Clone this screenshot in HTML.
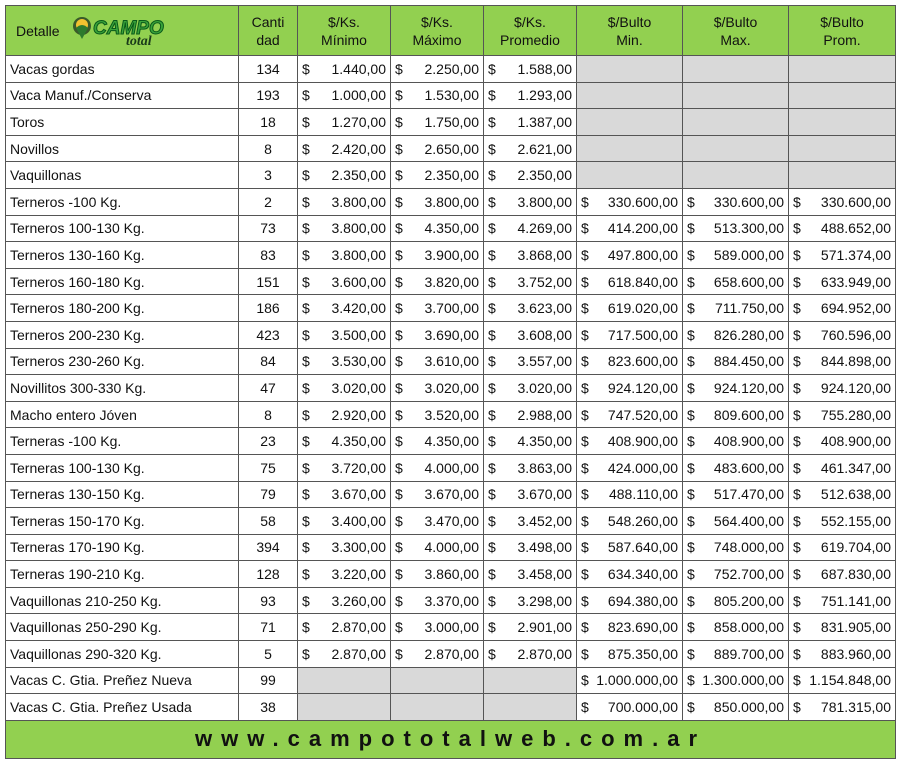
<!DOCTYPE html>
<html><head><meta charset="utf-8"><style>
body{margin:0;background:#fff;width:900px;height:765px;overflow:hidden;font-family:"Liberation Sans",sans-serif;}
table{position:absolute;left:5px;top:5px;border-collapse:collapse;table-layout:fixed;width:890px;}
tr{height:26.6px}
td{border:1px solid #555;font-size:14px;color:#111;padding:0 4px;white-space:nowrap;overflow:hidden;}
tr.h{height:50px}
tr.h td{background:#92d050;text-align:center;font-size:14px;line-height:18px;}
td.c{text-align:center}
td.g{background:#d9d9d9}
.m{display:flex;justify-content:space-between}
tr.f{height:38px}
tr.f td{background:#92d050;text-align:center;font-weight:bold;font-size:22px;letter-spacing:9px;}
</style></head><body>
<table>
<colgroup><col style="width:233px"><col style="width:59px"><col style="width:93px"><col style="width:93px"><col style="width:93px"><col style="width:106px"><col style="width:106px"><col style="width:107px"></colgroup>
<tr class="h"><td style="text-align:left;padding-left:10px"><span style="vertical-align:middle">Detalle</span>
<svg width="105" height="34" viewBox="0 0 105 34" style="vertical-align:middle;margin-left:8px"><circle cx="11" cy="12" r="9" fill="#3a5a2a"/><circle cx="11" cy="11" r="6" fill="#f2c230"/><path d="M5 14 Q11 8 17 14 L11 25 Z" fill="#2d7a2d"/><text x="22" y="20" font-family="Liberation Sans" font-weight="bold" font-style="italic" font-size="19" fill="#3aa33a" stroke="#0a5a1a" stroke-width="1">CAMPO</text><text x="55" y="31" font-family="Liberation Serif" font-style="italic" font-weight="bold" font-size="14" fill="#1a3a1a">total</text></svg></td>
<td>Canti<br>dad</td><td>$/Ks.<br>Mínimo</td><td>$/Ks.<br>Máximo</td><td>$/Ks.<br>Promedio</td><td>$/Bulto<br>Min.</td><td>$/Bulto<br>Max.</td><td>$/Bulto<br>Prom.</td></tr>
<tr><td>Vacas gordas</td><td class="c">134</td><td><div class="m"><span>$</span><span>1.440,00</span></div></td><td><div class="m"><span>$</span><span>2.250,00</span></div></td><td><div class="m"><span>$</span><span>1.588,00</span></div></td><td class="g"></td><td class="g"></td><td class="g"></td></tr>
<tr><td>Vaca Manuf./Conserva</td><td class="c">193</td><td><div class="m"><span>$</span><span>1.000,00</span></div></td><td><div class="m"><span>$</span><span>1.530,00</span></div></td><td><div class="m"><span>$</span><span>1.293,00</span></div></td><td class="g"></td><td class="g"></td><td class="g"></td></tr>
<tr><td>Toros</td><td class="c">18</td><td><div class="m"><span>$</span><span>1.270,00</span></div></td><td><div class="m"><span>$</span><span>1.750,00</span></div></td><td><div class="m"><span>$</span><span>1.387,00</span></div></td><td class="g"></td><td class="g"></td><td class="g"></td></tr>
<tr><td>Novillos</td><td class="c">8</td><td><div class="m"><span>$</span><span>2.420,00</span></div></td><td><div class="m"><span>$</span><span>2.650,00</span></div></td><td><div class="m"><span>$</span><span>2.621,00</span></div></td><td class="g"></td><td class="g"></td><td class="g"></td></tr>
<tr><td>Vaquillonas</td><td class="c">3</td><td><div class="m"><span>$</span><span>2.350,00</span></div></td><td><div class="m"><span>$</span><span>2.350,00</span></div></td><td><div class="m"><span>$</span><span>2.350,00</span></div></td><td class="g"></td><td class="g"></td><td class="g"></td></tr>
<tr><td>Terneros -100 Kg.</td><td class="c">2</td><td><div class="m"><span>$</span><span>3.800,00</span></div></td><td><div class="m"><span>$</span><span>3.800,00</span></div></td><td><div class="m"><span>$</span><span>3.800,00</span></div></td><td><div class="m"><span>$</span><span>330.600,00</span></div></td><td><div class="m"><span>$</span><span>330.600,00</span></div></td><td><div class="m"><span>$</span><span>330.600,00</span></div></td></tr>
<tr><td>Terneros 100-130 Kg.</td><td class="c">73</td><td><div class="m"><span>$</span><span>3.800,00</span></div></td><td><div class="m"><span>$</span><span>4.350,00</span></div></td><td><div class="m"><span>$</span><span>4.269,00</span></div></td><td><div class="m"><span>$</span><span>414.200,00</span></div></td><td><div class="m"><span>$</span><span>513.300,00</span></div></td><td><div class="m"><span>$</span><span>488.652,00</span></div></td></tr>
<tr><td>Terneros 130-160 Kg.</td><td class="c">83</td><td><div class="m"><span>$</span><span>3.800,00</span></div></td><td><div class="m"><span>$</span><span>3.900,00</span></div></td><td><div class="m"><span>$</span><span>3.868,00</span></div></td><td><div class="m"><span>$</span><span>497.800,00</span></div></td><td><div class="m"><span>$</span><span>589.000,00</span></div></td><td><div class="m"><span>$</span><span>571.374,00</span></div></td></tr>
<tr><td>Terneros 160-180 Kg.</td><td class="c">151</td><td><div class="m"><span>$</span><span>3.600,00</span></div></td><td><div class="m"><span>$</span><span>3.820,00</span></div></td><td><div class="m"><span>$</span><span>3.752,00</span></div></td><td><div class="m"><span>$</span><span>618.840,00</span></div></td><td><div class="m"><span>$</span><span>658.600,00</span></div></td><td><div class="m"><span>$</span><span>633.949,00</span></div></td></tr>
<tr><td>Terneros 180-200 Kg.</td><td class="c">186</td><td><div class="m"><span>$</span><span>3.420,00</span></div></td><td><div class="m"><span>$</span><span>3.700,00</span></div></td><td><div class="m"><span>$</span><span>3.623,00</span></div></td><td><div class="m"><span>$</span><span>619.020,00</span></div></td><td><div class="m"><span>$</span><span>711.750,00</span></div></td><td><div class="m"><span>$</span><span>694.952,00</span></div></td></tr>
<tr><td>Terneros 200-230 Kg.</td><td class="c">423</td><td><div class="m"><span>$</span><span>3.500,00</span></div></td><td><div class="m"><span>$</span><span>3.690,00</span></div></td><td><div class="m"><span>$</span><span>3.608,00</span></div></td><td><div class="m"><span>$</span><span>717.500,00</span></div></td><td><div class="m"><span>$</span><span>826.280,00</span></div></td><td><div class="m"><span>$</span><span>760.596,00</span></div></td></tr>
<tr><td>Terneros 230-260 Kg.</td><td class="c">84</td><td><div class="m"><span>$</span><span>3.530,00</span></div></td><td><div class="m"><span>$</span><span>3.610,00</span></div></td><td><div class="m"><span>$</span><span>3.557,00</span></div></td><td><div class="m"><span>$</span><span>823.600,00</span></div></td><td><div class="m"><span>$</span><span>884.450,00</span></div></td><td><div class="m"><span>$</span><span>844.898,00</span></div></td></tr>
<tr><td>Novillitos 300-330 Kg.</td><td class="c">47</td><td><div class="m"><span>$</span><span>3.020,00</span></div></td><td><div class="m"><span>$</span><span>3.020,00</span></div></td><td><div class="m"><span>$</span><span>3.020,00</span></div></td><td><div class="m"><span>$</span><span>924.120,00</span></div></td><td><div class="m"><span>$</span><span>924.120,00</span></div></td><td><div class="m"><span>$</span><span>924.120,00</span></div></td></tr>
<tr><td>Macho entero Jóven</td><td class="c">8</td><td><div class="m"><span>$</span><span>2.920,00</span></div></td><td><div class="m"><span>$</span><span>3.520,00</span></div></td><td><div class="m"><span>$</span><span>2.988,00</span></div></td><td><div class="m"><span>$</span><span>747.520,00</span></div></td><td><div class="m"><span>$</span><span>809.600,00</span></div></td><td><div class="m"><span>$</span><span>755.280,00</span></div></td></tr>
<tr><td>Terneras -100 Kg.</td><td class="c">23</td><td><div class="m"><span>$</span><span>4.350,00</span></div></td><td><div class="m"><span>$</span><span>4.350,00</span></div></td><td><div class="m"><span>$</span><span>4.350,00</span></div></td><td><div class="m"><span>$</span><span>408.900,00</span></div></td><td><div class="m"><span>$</span><span>408.900,00</span></div></td><td><div class="m"><span>$</span><span>408.900,00</span></div></td></tr>
<tr><td>Terneras 100-130 Kg.</td><td class="c">75</td><td><div class="m"><span>$</span><span>3.720,00</span></div></td><td><div class="m"><span>$</span><span>4.000,00</span></div></td><td><div class="m"><span>$</span><span>3.863,00</span></div></td><td><div class="m"><span>$</span><span>424.000,00</span></div></td><td><div class="m"><span>$</span><span>483.600,00</span></div></td><td><div class="m"><span>$</span><span>461.347,00</span></div></td></tr>
<tr><td>Terneras 130-150 Kg.</td><td class="c">79</td><td><div class="m"><span>$</span><span>3.670,00</span></div></td><td><div class="m"><span>$</span><span>3.670,00</span></div></td><td><div class="m"><span>$</span><span>3.670,00</span></div></td><td><div class="m"><span>$</span><span>488.110,00</span></div></td><td><div class="m"><span>$</span><span>517.470,00</span></div></td><td><div class="m"><span>$</span><span>512.638,00</span></div></td></tr>
<tr><td>Terneras 150-170 Kg.</td><td class="c">58</td><td><div class="m"><span>$</span><span>3.400,00</span></div></td><td><div class="m"><span>$</span><span>3.470,00</span></div></td><td><div class="m"><span>$</span><span>3.452,00</span></div></td><td><div class="m"><span>$</span><span>548.260,00</span></div></td><td><div class="m"><span>$</span><span>564.400,00</span></div></td><td><div class="m"><span>$</span><span>552.155,00</span></div></td></tr>
<tr><td>Terneras 170-190 Kg.</td><td class="c">394</td><td><div class="m"><span>$</span><span>3.300,00</span></div></td><td><div class="m"><span>$</span><span>4.000,00</span></div></td><td><div class="m"><span>$</span><span>3.498,00</span></div></td><td><div class="m"><span>$</span><span>587.640,00</span></div></td><td><div class="m"><span>$</span><span>748.000,00</span></div></td><td><div class="m"><span>$</span><span>619.704,00</span></div></td></tr>
<tr><td>Terneras 190-210 Kg.</td><td class="c">128</td><td><div class="m"><span>$</span><span>3.220,00</span></div></td><td><div class="m"><span>$</span><span>3.860,00</span></div></td><td><div class="m"><span>$</span><span>3.458,00</span></div></td><td><div class="m"><span>$</span><span>634.340,00</span></div></td><td><div class="m"><span>$</span><span>752.700,00</span></div></td><td><div class="m"><span>$</span><span>687.830,00</span></div></td></tr>
<tr><td>Vaquillonas 210-250 Kg.</td><td class="c">93</td><td><div class="m"><span>$</span><span>3.260,00</span></div></td><td><div class="m"><span>$</span><span>3.370,00</span></div></td><td><div class="m"><span>$</span><span>3.298,00</span></div></td><td><div class="m"><span>$</span><span>694.380,00</span></div></td><td><div class="m"><span>$</span><span>805.200,00</span></div></td><td><div class="m"><span>$</span><span>751.141,00</span></div></td></tr>
<tr><td>Vaquillonas 250-290 Kg.</td><td class="c">71</td><td><div class="m"><span>$</span><span>2.870,00</span></div></td><td><div class="m"><span>$</span><span>3.000,00</span></div></td><td><div class="m"><span>$</span><span>2.901,00</span></div></td><td><div class="m"><span>$</span><span>823.690,00</span></div></td><td><div class="m"><span>$</span><span>858.000,00</span></div></td><td><div class="m"><span>$</span><span>831.905,00</span></div></td></tr>
<tr><td>Vaquillonas 290-320 Kg.</td><td class="c">5</td><td><div class="m"><span>$</span><span>2.870,00</span></div></td><td><div class="m"><span>$</span><span>2.870,00</span></div></td><td><div class="m"><span>$</span><span>2.870,00</span></div></td><td><div class="m"><span>$</span><span>875.350,00</span></div></td><td><div class="m"><span>$</span><span>889.700,00</span></div></td><td><div class="m"><span>$</span><span>883.960,00</span></div></td></tr>
<tr><td>Vacas C. Gtia. Preñez Nueva</td><td class="c">99</td><td class="g"></td><td class="g"></td><td class="g"></td><td><div class="m"><span>$</span><span>1.000.000,00</span></div></td><td><div class="m"><span>$</span><span>1.300.000,00</span></div></td><td><div class="m"><span>$</span><span>1.154.848,00</span></div></td></tr>
<tr><td>Vacas C. Gtia. Preñez Usada</td><td class="c">38</td><td class="g"></td><td class="g"></td><td class="g"></td><td><div class="m"><span>$</span><span>700.000,00</span></div></td><td><div class="m"><span>$</span><span>850.000,00</span></div></td><td><div class="m"><span>$</span><span>781.315,00</span></div></td></tr>
<tr class="f"><td colspan="8">www.campototalweb.com.ar</td></tr>
</table>
</body></html>
